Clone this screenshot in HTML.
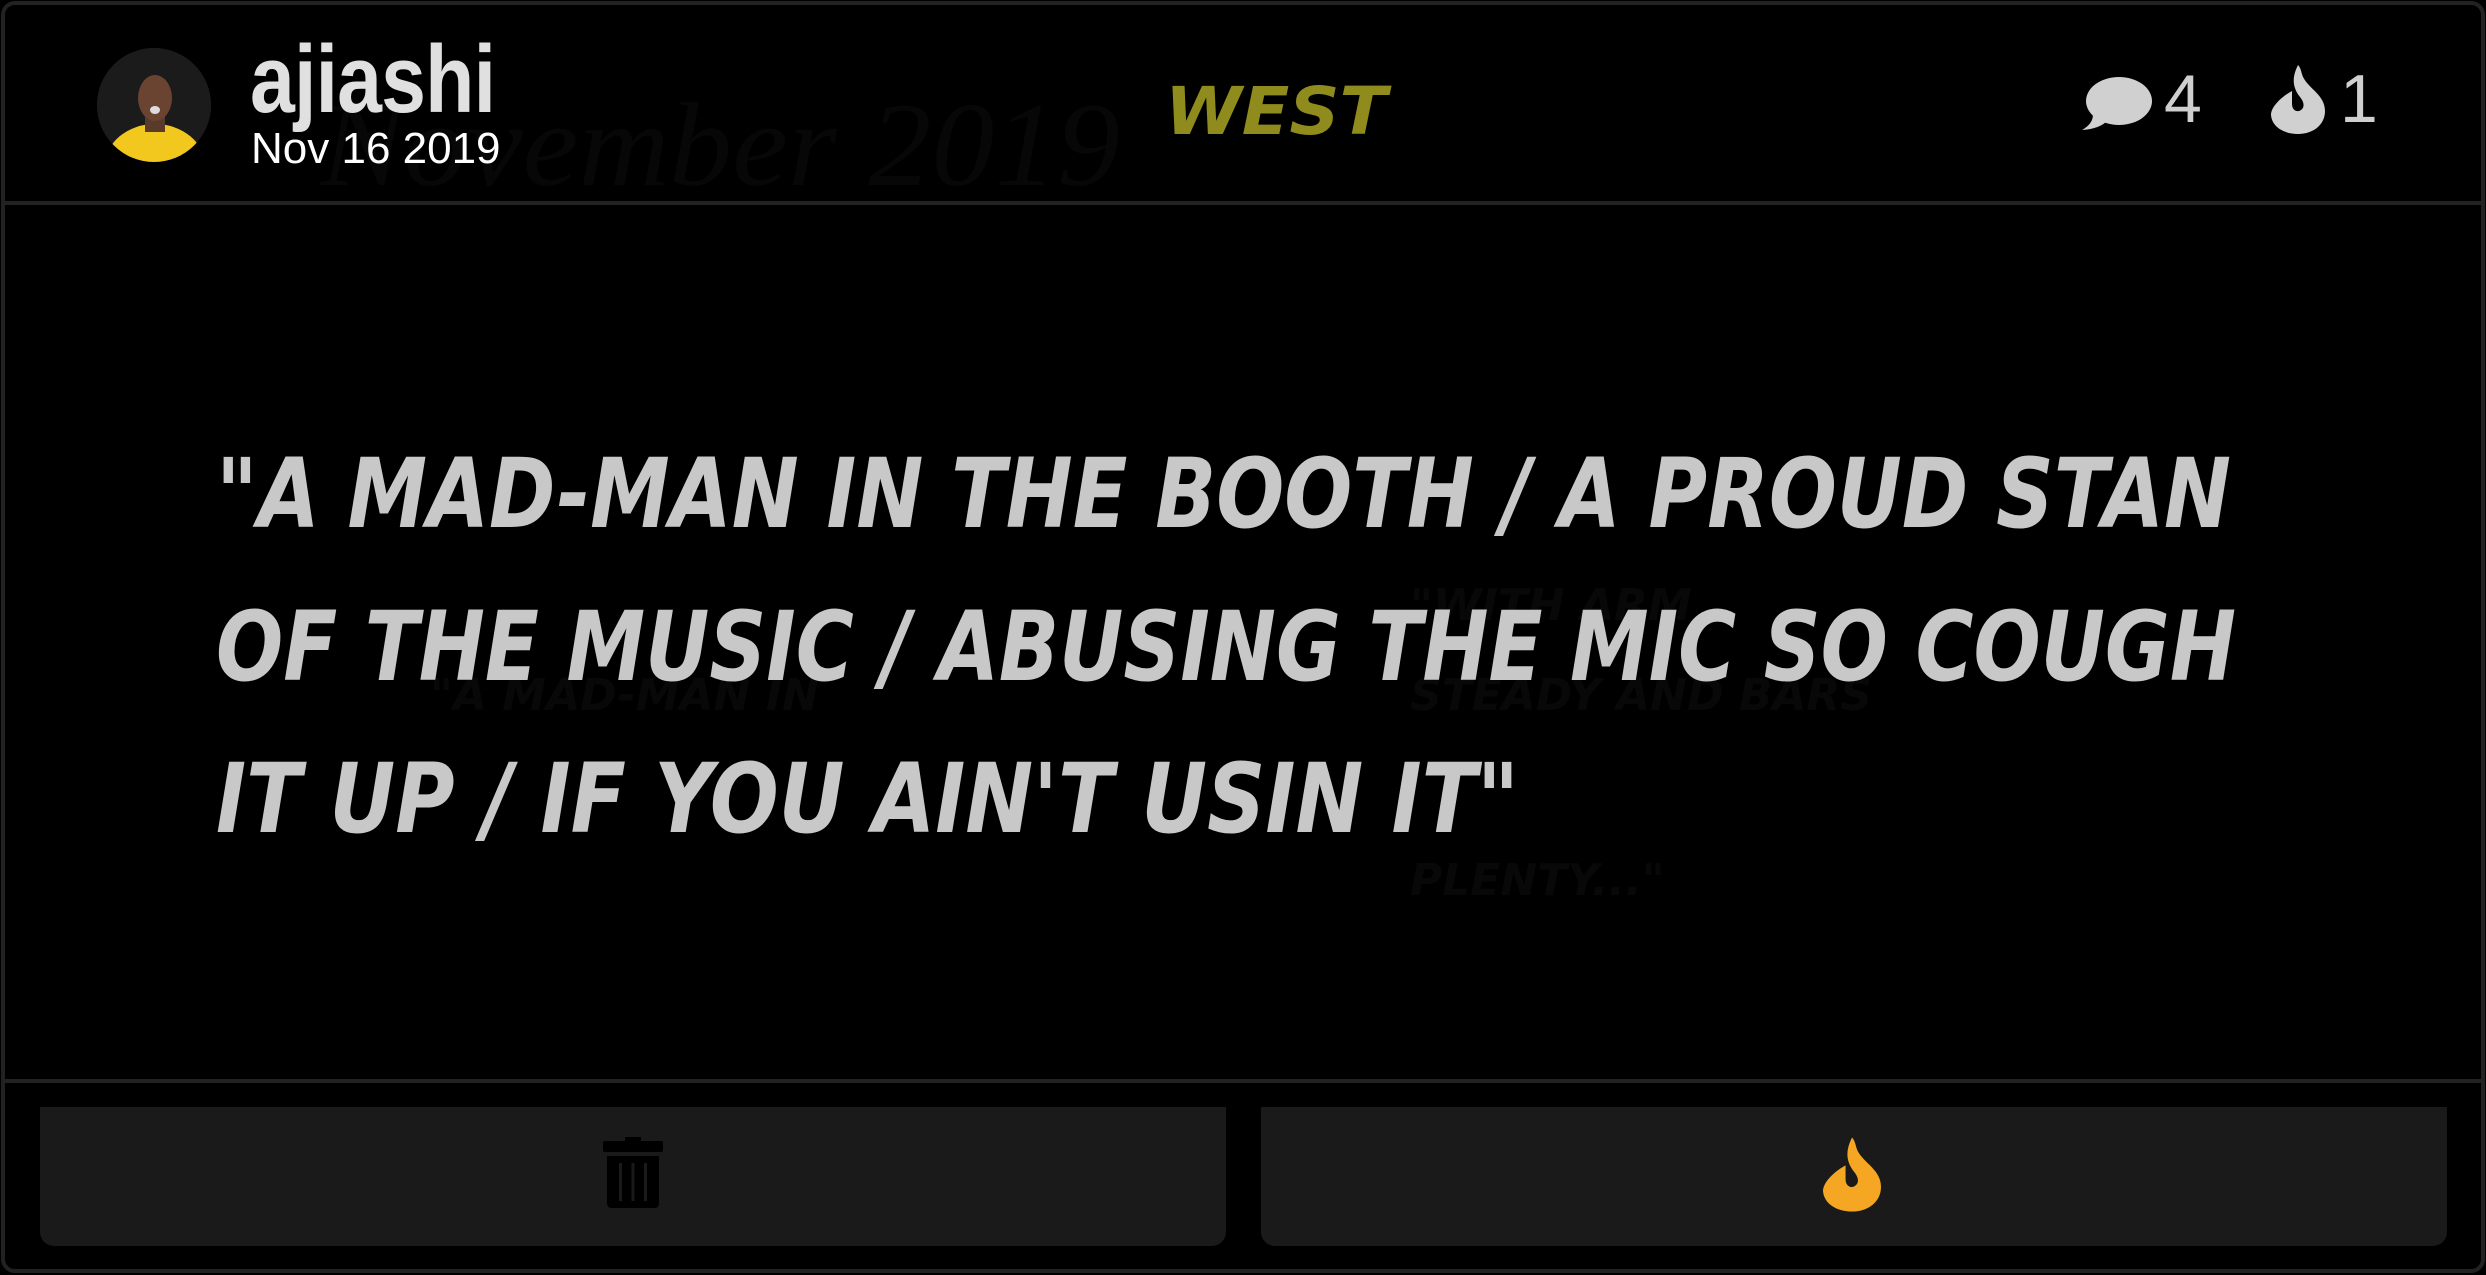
<!DOCTYPE html>
<html><head><meta charset="utf-8"><style>
html,body{margin:0;padding:0;background:#000;}
body{width:2486px;height:1275px;position:relative;overflow:hidden;font-family:"Liberation Sans",sans-serif;}
.card{position:absolute;left:1px;top:1px;width:2484px;height:1272px;border:4px solid #222;border-radius:14px;box-sizing:border-box;background:#000;}
.hr{position:absolute;left:3px;width:2480px;height:4px;background:#222;}
.avatar{position:absolute;left:97px;top:48px;width:114px;height:114px;border-radius:50%;background:#1c1c1c;overflow:hidden;}
.name{position:absolute;left:250px;top:30px;font-weight:bold;font-size:96px;line-height:100px;color:#e0e0e0;letter-spacing:-1px;transform:scaleX(0.84);transform-origin:left;}
.date{position:absolute;left:251px;top:124px;font-size:44px;color:#fff;}
.btn{position:absolute;top:1107px;height:139px;background:#1a1a1a;border-radius:0 0 14px 14px;}
.cnt{position:absolute;font-size:68px;color:#cfcfcf;font-weight:300;top:60px;}
</style></head><body>
<div class="card"></div>
<div class="hr" style="top:201px"></div>
<div class="hr" style="top:1079px"></div>
<svg style="position:absolute;left:0;top:0" width="2486" height="1275">
  <text x="320" y="185" font-family="Liberation Serif" font-style="italic" font-size="120" fill="#070707" textLength="800" lengthAdjust="spacingAndGlyphs">November 2019</text>
  <text x="430" y="710" font-family="DejaVu Sans" font-weight="bold" font-style="oblique" font-size="44" fill="#080808">"A MAD-MAN IN</text>
  <text x="1410" y="620" font-family="DejaVu Sans" font-weight="bold" font-style="oblique" font-size="44" fill="#080808">"WITH ARM</text>
  <text x="1410" y="710" font-family="DejaVu Sans" font-weight="bold" font-style="oblique" font-size="44" fill="#080808">STEADY AND BARS</text>
  <text x="1410" y="895" font-family="DejaVu Sans" font-weight="bold" font-style="oblique" font-size="44" fill="#080808">PLENTY..."</text>
  <text x="1165" y="134" font-family="DejaVu Sans" font-weight="bold" font-style="oblique" font-size="66" fill="#8f8b1c" textLength="222" lengthAdjust="spacingAndGlyphs">WEST</text>
  <g font-family="DejaVu Sans" font-weight="bold" font-style="oblique" font-size="96" fill="#c8c8c8">
    <text x="216" y="527" textLength="2015" lengthAdjust="spacingAndGlyphs">"A MAD-MAN IN THE BOOTH / A PROUD STAN</text>
    <text x="216" y="680" textLength="2020" lengthAdjust="spacingAndGlyphs">OF THE MUSIC / ABUSING THE MIC SO COUGH</text>
    <text x="216" y="832" textLength="1303" lengthAdjust="spacingAndGlyphs">IT UP / IF YOU AIN'T USIN IT"</text>
  </g>
</svg>
<div class="avatar">
  <svg width="114" height="114" viewBox="0 0 114 114">
    <rect width="114" height="114" fill="#1b1b1b"/>
    <ellipse cx="58" cy="118" rx="50" ry="42" fill="#f2c81e"/>
    <rect x="48" y="62" width="20" height="22" fill="#5a3a28"/>
    <ellipse cx="58" cy="50" rx="17" ry="23" fill="#6a4430"/>
    <ellipse cx="58" cy="62" rx="5" ry="4" fill="#dcdcdc"/>
  </svg>
</div>
<div class="name">ajiashi</div>
<div class="date">Nov 16 2019</div>
<svg style="position:absolute;left:2082px;top:76px" width="70" height="54" viewBox="0 0 70 54">
  <ellipse cx="37" cy="25" rx="33" ry="24" fill="#d0d0d0"/>
  <path d="M10 34 Q14 46 0 54 Q16 53 24 46 Z" fill="#d0d0d0"/>
</svg>
<div class="cnt" style="left:2164px">4</div>
<svg style="position:absolute;left:2271px;top:65px" width="54" height="69" viewBox="0 0 54 69">
  <path d="M27 0 C21 12 21 22 29 32 C33 37 34 42 30 45 C26 48 21 45 21 39 L21 26 C10 32 0 42 0 50 C1 62 13 69 27 69 C42 69 54 60 54 46 C54 30 38 24 32 12 C30 7 30 3 27 0 Z" fill="#d0d0d0"/>
</svg>
<div class="cnt" style="left:2340px">1</div>
<div class="btn" style="left:40px;width:1186px"></div>
<div class="btn" style="left:1261px;width:1186px"></div>
<svg style="position:absolute;left:603px;top:1137px" width="60" height="71" viewBox="0 0 60 71">
  <rect x="22" y="0" width="16" height="6" fill="#000"/>
  <rect x="0" y="4" width="60" height="11" rx="2" fill="#000"/>
  <path d="M4 19 H56 V66 Q56 71 51 71 H9 Q4 71 4 66 Z" fill="#000"/>
  <rect x="16" y="26" width="3" height="38" fill="#1a1a1a"/>
  <rect x="28.5" y="26" width="3" height="38" fill="#1a1a1a"/>
  <rect x="41" y="26" width="3" height="38" fill="#1a1a1a"/>
</svg>
<svg style="position:absolute;left:1823px;top:1137px" width="58" height="75" viewBox="0 0 54 69">
  <path d="M27 0 C21 12 21 22 29 32 C33 37 34 42 30 45 C26 48 21 45 21 39 L21 26 C10 32 0 42 0 50 C1 62 13 69 27 69 C42 69 54 60 54 46 C54 30 38 24 32 12 C30 7 30 3 27 0 Z" fill="#f5a623"/>
</svg>
</body></html>
